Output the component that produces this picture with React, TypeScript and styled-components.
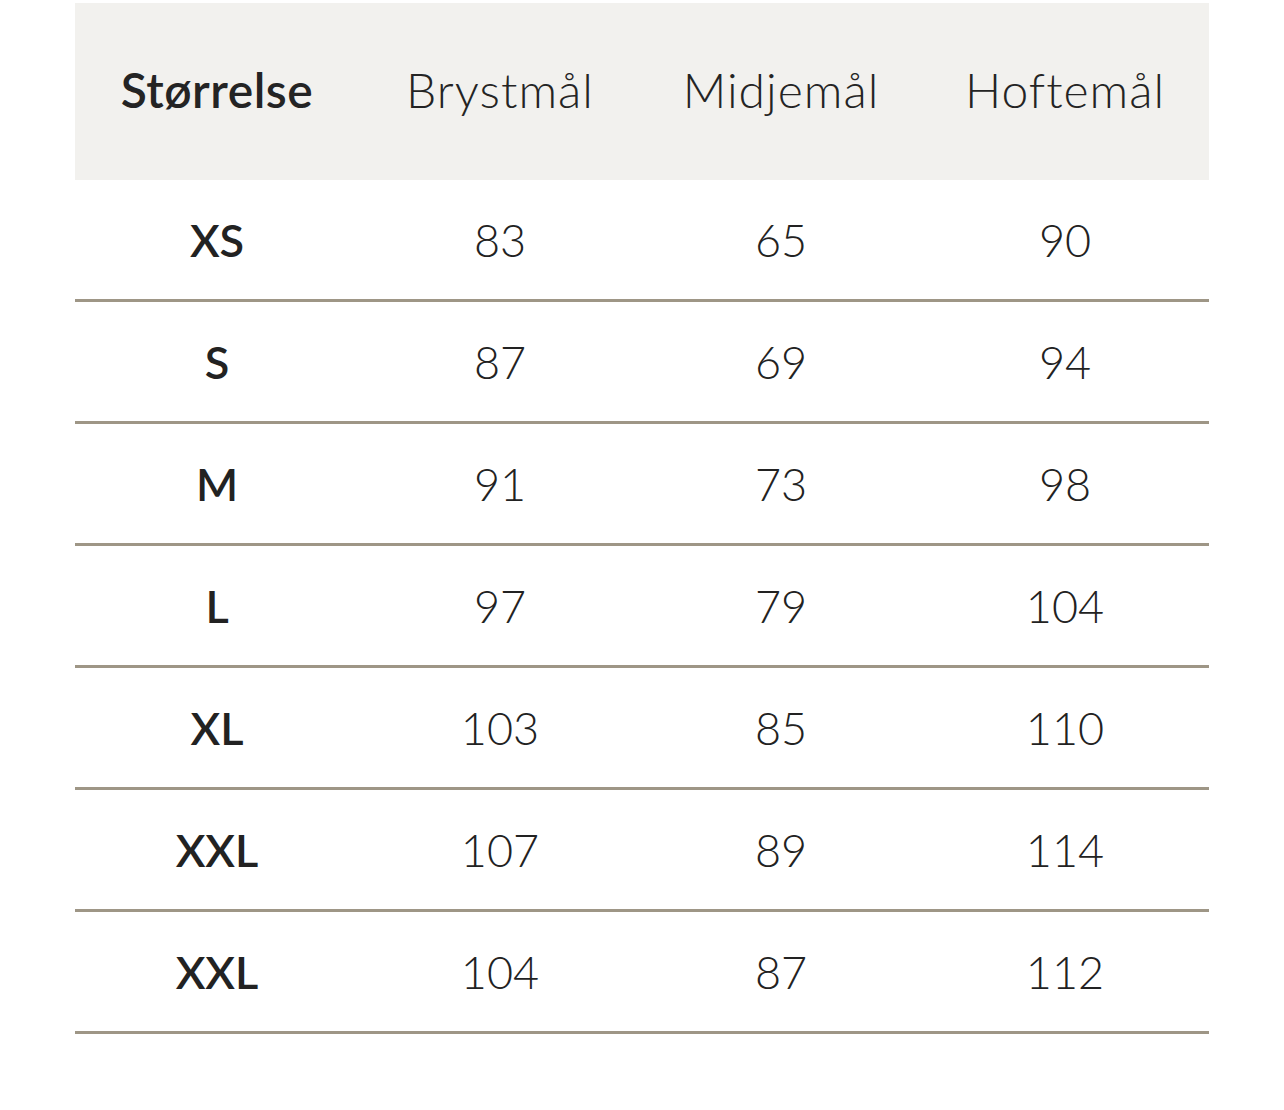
import * as React from 'react';
import styled, { createGlobalStyle } from 'styled-components';

const GlobalStyle = createGlobalStyle`
  body {
    margin: 0;
    background: #ffffff;
    font-family: Lato, "Open Sans", sans-serif;
    color: #222222;
  }
`;

const Page = styled.div`
  padding: 3px 75px 0 75px;
`;

const Table = styled.table`
  width: 1134px;
  border-collapse: separate;
  border-spacing: 0;
  table-layout: fixed;
`;

const Col = styled.col<{ $width: number }>`
  width: ${p => p.$width}px;
`;

const HeadRow = styled.tr`
  background: #f2f1ee;
  height: 177px;
`;

const HeadCell = styled.th<{ $strong?: boolean }>`
  font-size: 48px;
  font-weight: ${p => (p.$strong ? 600 : 300)};
  letter-spacing: ${p => (p.$strong ? '0.5px' : '1px')};
  text-align: center;
  color: #242424;
  padding: 0 0 4px 0;
`;

const Row = styled.tr`
  height: 122px;
`;

const Cell = styled.td<{ $strong?: boolean }>`
  font-size: 45px;
  font-weight: ${p => (p.$strong ? 600 : 300)};
  text-align: center;
  color: #222222;
  padding: 1px 0 0 0;
  border-bottom: 3px solid #9e9686;
`;

const widths = [284, 282, 280, 288];

const sizes = [
  ['XS', 83, 65, 90],
  ['S', 87, 69, 94],
  ['M', 91, 73, 98],
  ['L', 97, 79, 104],
  ['XL', 103, 85, 110],
  ['XXL', 107, 89, 114],
  ['XXL', 104, 87, 112],
];

export default function App() {
  return (
    <>
      <GlobalStyle />
      <Page>
        <Table>
          <colgroup>
            {widths.map((w, i) => <Col key={i} $width={w} />)}
          </colgroup>
          <thead>
            <HeadRow>
              <HeadCell $strong>Størrelse</HeadCell>
              <HeadCell>Brystmål</HeadCell>
              <HeadCell>Midjemål</HeadCell>
              <HeadCell>Hoftemål</HeadCell>
            </HeadRow>
          </thead>
          <tbody>
            {sizes.map(([size, bust, waist, hip], i) => (
              <Row key={i}>
                <Cell $strong>{size}</Cell>
                <Cell>{bust}</Cell>
                <Cell>{waist}</Cell>
                <Cell>{hip}</Cell>
              </Row>
            ))}
          </tbody>
        </Table>
      </Page>
    </>
  );
}
